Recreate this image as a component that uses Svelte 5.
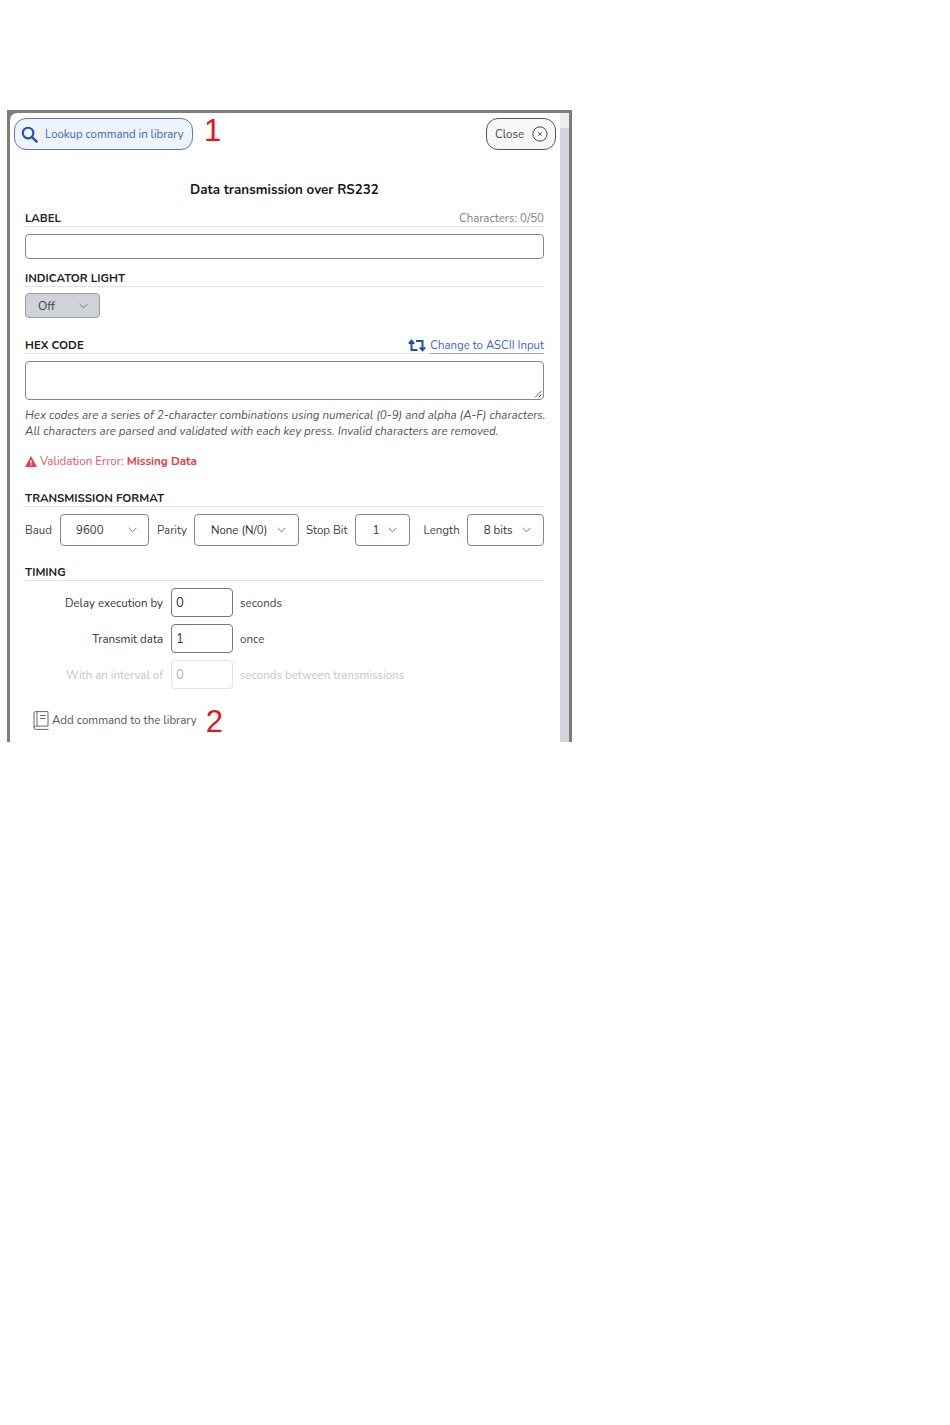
<script>
  const selects = [
    { label: 'Baud', value: '9600', cls: 'baud' },
    { label: 'Parity', value: 'None (N/0)', cls: 'parity' },
    { label: 'Stop Bit', value: '1', cls: 'stop' },
    { label: 'Length', value: '8 bits', cls: 'length' }
  ];
</script>

{#snippet chevron()}
  <svg class="chev" viewBox="0 0 10 6" width="9" height="6" aria-hidden="true"><path d="M1 1l4 4 4-4" fill="none" stroke="#666" stroke-width="1" stroke-linecap="round" stroke-linejoin="round"/></svg>
{/snippet}

<div class="frame">
  <div class="modal">
    <div class="content">
      <header class="top">
        <button class="lookup">
          <svg viewBox="0 0 18 18" width="17" height="17" aria-hidden="true"><circle cx="7.5" cy="7.5" r="5.6" fill="none" stroke="#1f4fc0" stroke-width="2.2"/><path d="M11.7 11.7l4.8 4.8" stroke="#1f4fc0" stroke-width="2.6" stroke-linecap="round"/></svg>
          <span>Lookup command in library</span>
        </button>
        <span class="note one">1</span>
        <button class="close">
          <span>Close</span>
          <svg viewBox="0 0 16 16" width="16" height="16" aria-hidden="true"><circle cx="8" cy="8" r="7.2" fill="none" stroke="#444" stroke-width="1"/><path d="M6.3 6.3l3.4 3.4M9.7 6.3l-3.4 3.4" stroke="#444" stroke-width="1"/></svg>
        </button>
      </header>

      <h1>Data transmission over RS232</h1>

      <div class="section label-sec">
        <div class="head"><h2>LABEL</h2><span class="count">Characters: 0/50</span></div>
        <div class="field text"></div>
      </div>

      <div class="section indicator">
        <div class="head"><h2>INDICATOR LIGHT</h2></div>
        <div class="offsel">Off {@render chevron()}</div>
      </div>

      <div class="section hex">
        <div class="head">
          <h2>HEX CODE</h2>
          <span class="switch">
            <svg viewBox="0 0 18 13" width="18" height="13" aria-hidden="true"><path d="M3.5 2v9H9.5M.8 4.6l2.7-2.8 2.7 2.8M14.5 11V2H8M11.8 8.4l2.7 2.8 2.7-2.8" fill="none" stroke="#1f4fa8" stroke-width="2"/></svg>
            <span class="link">Change to ASCII Input</span>
          </span>
        </div>
        <div class="field area">
          <svg class="grip" viewBox="0 0 8 8" width="8" height="8" aria-hidden="true"><path d="M1 7.5L7.5 1M4.5 7.5L7.5 4.5" stroke="#555" stroke-width="1"/></svg>
        </div>
        <p class="help">Hex codes are a series of 2-character combinations using numerical (0-9) and alpha (A-F) characters.<br>All characters are parsed and validated with each key press. Invalid characters are removed.</p>
        <p class="error">
          <svg viewBox="0 0 12 11" width="12" height="11" aria-hidden="true"><path d="M6 0l6 11H0z" fill="#e0434b"/><path d="M6 4v3.6M6 8.6v1" stroke="#fff" stroke-width="1.2"/></svg>
          <span>Validation Error: <b>Missing Data</b></span>
        </p>
      </div>

      <div class="section format">
        <div class="head"><h2>TRANSMISSION FORMAT</h2></div>
        <div class="selects">
          {#each selects as s}
            <span class="sel-label lab-{s.cls}">{s.label}</span>
            <div class="sel {s.cls}"><span>{s.value}</span>{@render chevron()}</div>
          {/each}
        </div>
      </div>

      <div class="section timing">
        <div class="head"><h2>TIMING</h2></div>
        <div class="rows">
          <div class="row"><span class="lbl">Delay execution by</span><div class="num">0</div><span>seconds</span></div>
          <div class="row"><span class="lbl">Transmit data</span><div class="num">1</div><span>once</span></div>
          <div class="row off"><span class="lbl">With an interval of</span><div class="num">0</div><span>seconds between transmissions</span></div>
        </div>
      </div>

      <div class="add">
        <svg viewBox="0 0 16 19" width="16" height="19" aria-hidden="true"><path d="M1 2.2A1.6 1.6 0 0 1 2.6.6H15v14.5H2.6A1.6 1.6 0 0 0 1 16.7 1.6 1.6 0 0 0 2.6 18.4H15.5M1 2v15M4 .6v14.5M7 4.5h5.5M7 7.5h5.5" fill="none" stroke="#666" stroke-width="1"/></svg>
        <span>Add command to the library</span>
        <span class="note two">2</span>
      </div>
    </div>
    <div class="scroll"><div class="cap"></div><div class="thumb"></div></div>
  </div>
</div>

<style>
  :global(body) { margin: 0; background: #fff; }
  .frame {
    box-sizing: border-box;
    margin: 110px 0 0 7px;
    width: 565px;
    height: 632px;
    background: #7d7d7d;
    padding: 3px 3px 0 3px;
    font-family: "Nunito", "Lato", "Open Sans", sans-serif;
    color: #333;
    font-size: 11.5px;
  }
  .modal {
    display: flex;
    height: 100%;
    background: #fff;
    border-radius: 7px 0 0 0;
    overflow: hidden;
  }
  .content { flex: 1; min-width: 0; padding: 5px 4px 0 4px; }
  .scroll { width: 9px; display: flex; flex-direction: column; background: #fff; }
  .cap { height: 15px; background: #eceef1; }
  .thumb { flex: 1; background: #d2d6dc; }

  .top { display: flex; align-items: flex-start; }
  button { font: inherit; cursor: pointer; display: flex; align-items: center; box-sizing: border-box; height: 32px; }
  .lookup {
    width: 179px; padding: 0 6px; gap: 7px;
    background: #eef3fc; color: #3a66c4;
    border: 1px solid #5b78c0; border-radius: 12px;
    white-space: nowrap;
    font-size: 11.4px;
  }
  .close {
    margin-left: auto; width: 70px; padding: 0 7px 0 8px; gap: 8px;
    background: #f7f7f7; color: #444;
    border: 1px solid #555; border-radius: 12px;
  }
  .note { font-family: "Liberation Sans", sans-serif; color: #e3141c; font-size: 31px; line-height: 26px; }
  .one { margin-left: 11px; }
  .two { margin: 4px 0 0 6px; }

  h1 { margin: 31px 0 0; text-align: center; font-size: 13.4px; line-height: 18px; font-weight: 700; color: #1a1a1a; padding-right: 1px; }
  .section { margin-left: 11px; width: 519px; }
  .head { display: flex; justify-content: space-between; align-items: center; height: 16px; padding-top: 2px; border-bottom: 1px solid #e2e4e8; }
  h2 { margin: 0; font-size: 11.5px; font-weight: 700; color: #222; }
  .count { color: #808080; }
  .label-sec { margin-top: 9px; }
  .field { box-sizing: border-box; border: 1px solid #888; border-radius: 4px; background: #fff; }
  .text { height: 25px; margin-top: 7px; }
  .indicator { margin-top: 9px; }
  .offsel {
    box-sizing: border-box; margin-top: 6px; width: 75px; height: 25px;
    background: #cfd3d9; border: 1px solid #9a9da3; border-radius: 4px;
    display: flex; align-items: center; justify-content: space-between;
    padding: 0 11px 0 12px; color: #444; font-size: 12px;
  }
  .hex { margin-top: 17px; }
  .switch { display: flex; align-items: center; gap: 4px; }
  .link { color: #3a66c4; font-size: 11.4px; border-bottom: 1px solid #8ea6dc; line-height: 16px; margin-bottom: -1px; }
  .area { position: relative; height: 39px; margin-top: 7px; }
  .grip { position: absolute; right: 1px; bottom: 1px; }
  .help { margin: 8px 0 0; font-style: italic; font-size: 11.55px; line-height: 15.5px; color: #555; white-space: nowrap; }
  .error { margin: 15px 0 0; display: flex; align-items: center; gap: 3px; color: #e5575e; font-size: 11.6px; line-height: 15px; }
  .error b { font-weight: 700; color: #dc4048; }
  .format { margin-top: 19px; }
  .selects { display: flex; align-items: center; margin-top: 7px; gap: 7px; }
  .sel-label { color: #444; }
  .lab-parity { margin-left: 1px; }
  .lab-length { margin-left: 7px; }
  .sel {
    box-sizing: border-box; height: 32px; border: 1px solid #888; border-radius: 4px;
    display: flex; align-items: center; justify-content: space-between; color: #333;
  }
  .baud { width: 89px; padding: 0 11px 0 15px; margin-left: 1px; }
  .parity { width: 105px; padding: 0 12px 0 16px; }
  .stop { width: 55px; padding: 0 12px 0 17px; }
  .length { width: 77px; padding: 0 12px 0 16px; }
  .timing { margin-top: 16px; }
  .rows { display: flex; flex-direction: column; gap: 7px; margin-top: 7px; }
  .row { display: flex; align-items: center; gap: 8px; height: 29px; color: #444; }
  .lbl { width: 138px; text-align: right; color: #333; }
  .num {
    box-sizing: border-box; width: 62px; height: 29px; margin-right: -1px; border: 1px solid #777; border-radius: 4px;
    padding-left: 4px; display: flex; align-items: center; font-size: 13px; color: #333;
  }
  .off, .off .lbl { color: #c4c4c4; }
  .off .num { border-color: #e3e3e3; color: #b8b8b8; }
  .add { display: flex; align-items: center; margin: 16px 0 0 19px; color: #555; gap: 3px; }
</style>
